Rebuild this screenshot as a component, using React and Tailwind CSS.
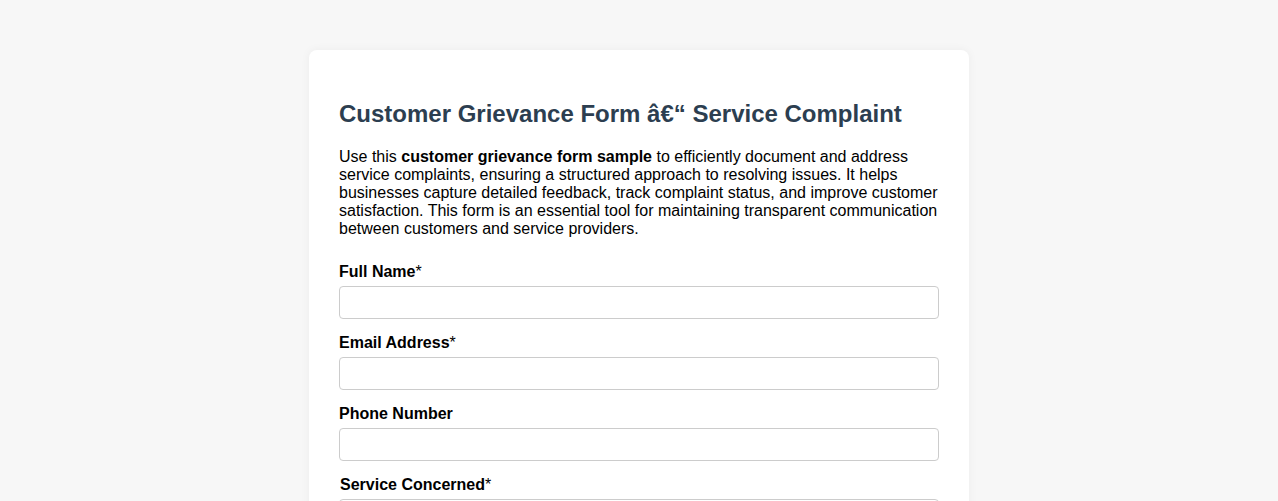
import React from 'react';

const Field = ({ label, required, type = 'text', shift = false }) => (
  <div className="mb-[15px]">
    <label className={`block font-bold text-[16px] leading-[18px] mb-[5px] text-black ${shift ? 'pl-px' : ''}`}>
      {label}
      {required && <span className="font-normal">*</span>}
    </label>
    <input
      type={type}
      className="block w-full h-[33px] border border-[#ccc] rounded-[4px] bg-white px-2 outline-none"
    />
  </div>
);

const App = () => {
  return (
    <div className="min-h-screen bg-[#f7f7f7] pt-[50px] font-['Liberation_Sans',Arial,sans-serif]">
      <div className="w-[660px] mx-auto bg-white rounded-[8px] shadow-[0_0_10px_rgba(0,0,0,0.05)] px-[30px] pt-[50px] pb-[30px]">
        <h2 className="text-[24px] leading-[28px] font-bold text-[#2c3e50] mb-[20px]">
          Customer Grievance Form â€“ Service Complaint
        </h2>
        <p className="text-[16px] leading-[18px] text-black mb-[25px]">
          Use this <strong>customer grievance form sample</strong> to efficiently document and address
          service complaints, ensuring a structured approach to resolving issues. It helps
          businesses capture detailed feedback, track complaint status, and improve customer
          satisfaction. This form is an essential tool for maintaining transparent communication
          between customers and service providers.
        </p>
        <form>
          <Field label="Full Name" required />
          <Field label="Email Address" required type="email" />
          <Field label="Phone Number" type="tel" />
          <Field label="Service Concerned" required shift />
        </form>
      </div>
    </div>
  );
};

export default App;
